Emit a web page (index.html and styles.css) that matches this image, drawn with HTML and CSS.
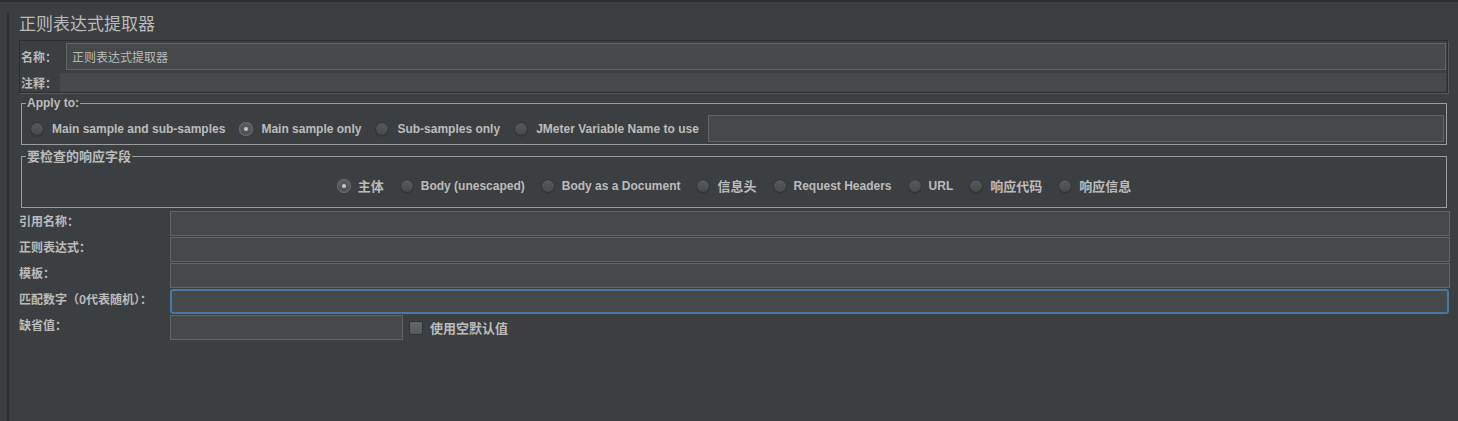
FILE: index.html
```html
<!DOCTYPE html>
<html lang="zh-CN">
<head>
<meta charset="utf-8">
<title>正则表达式提取器</title>
<link rel="stylesheet" href="styles.css">
</head>
<body>
<div class="page">
  <div class="main">
    <h1 class="title">正则表达式提取器</h1>

    <div class="name-panel">
      <div class="name-row">
        <label class="cap cap-name">名称：</label>
        <input class="field field-name" type="text" value="正则表达式提取器" readonly>
      </div>
      <div class="comment-row">
        <label class="cap cap-comment">注释：</label>
        <input class="field field-comment" type="text" value="" readonly>
      </div>
    </div>

    <fieldset class="group group-apply">
      <legend class="legend legend-latin">Apply to:</legend>
      <div class="radio-row row-apply">
        <span class="radio"><i class="dot"></i>Main sample and sub-samples</span>
        <span class="radio"><i class="dot on"></i>Main sample only</span>
        <span class="radio"><i class="dot"></i>Sub-samples only</span>
        <span class="radio radio-last"><i class="dot"></i>JMeter Variable Name to use</span>
        <input class="field field-var" type="text" value="" readonly>
      </div>
    </fieldset>

    <fieldset class="group group-check">
      <legend class="legend legend-cjk">要检查的响应字段</legend>
      <div class="radio-row row-check">
        <span class="radio cjk"><i class="dot on"></i>主体</span>
        <span class="radio"><i class="dot"></i>Body (unescaped)</span>
        <span class="radio"><i class="dot"></i>Body as a Document</span>
        <span class="radio cjk"><i class="dot"></i>信息头</span>
        <span class="radio"><i class="dot"></i>Request Headers</span>
        <span class="radio"><i class="dot"></i>URL</span>
        <span class="radio cjk"><i class="dot"></i>响应代码</span>
        <span class="radio cjk radio-end"><i class="dot"></i>响应信息</span>
      </div>
    </fieldset>

    <div class="form-grid">
      <label class="form-cap">引用名称：</label>
      <input class="field" type="text" value="" readonly>
      <label class="form-cap">正则表达式：</label>
      <input class="field" type="text" value="" readonly>
      <label class="form-cap">模板：</label>
      <input class="field" type="text" value="" readonly>
      <label class="form-cap">匹配数字（0代表随机）：</label>
      <input class="field field-focus" type="text" value="" readonly>
      <label class="form-cap">缺省值：</label>
      <div class="default-row">
        <input class="field field-default" type="text" value="" readonly>
        <span class="check cjk"><i class="box"></i>使用空默认值</span>
      </div>
    </div>
  </div>
</div>
</body>
</html>
```

FILE: styles.css
```css
* {
  box-sizing: border-box;
}

html,
body {
  margin: 0;
  padding: 0;
}

body {
  background: #3c3f41;
  color: #bbbbbb;
  font-family: "Liberation Sans", Arial, "Noto Sans CJK SC", sans-serif;
  font-size: 12px;
  overflow: hidden;
}

.page {
  height: 421px;
  border-top: 2px solid #2b2d2e;
  padding-left: 7px;
}

.main {
  height: 100%;
  border-left: 2px solid #2b2d2e;
  padding: 0 8px 0 10px;
}

.title {
  margin: 11px 0 0 0;
  font-family: "Noto Sans CJK SC", sans-serif;
  font-size: 17px;
  line-height: 20px;
  font-weight: 400;
  color: #bbbbbb;
}

/* name / comment panel */
.name-panel {
  margin: 7px 2px 0 0;
  border: 1px solid #2b2d2e;
  box-shadow: 1px 1px 0 #56595b;
  padding: 1px 1px 0 1px;
}

.name-row,
.comment-row {
  display: flex;
  align-items: center;
}

.name-row {
  margin-top: 1px;
  height: 27px;
}

.comment-row {
  margin-top: 3px;
  height: 19px;
}

.cap {
  font-family: "Noto Sans CJK SC", sans-serif;
  font-weight: 700;
  font-size: 12px;
  line-height: 16px;
}

.cap-name {
  width: 45px;
}

.cap-comment {
  width: 39px;
}

.field {
  display: block;
  appearance: none;
  -webkit-appearance: none;
  margin: 0;
  background: #45494a;
  border: 1px solid #646464;
  border-radius: 0;
  color: #bbbbbb;
  font-family: "Noto Sans CJK SC", sans-serif;
  font-size: 12px;
  padding: 0 5px;
  outline: none;
}

.field-name {
  flex: 1;
  height: 27px;
}

.field-comment {
  flex: 1;
  height: 19px;
  border: none;
}

/* groups */
.group {
  margin: 3px 3px 0 2px;
  padding: 0;
  border: 1px solid #9a9c9e;
  min-width: 0;
}

.legend {
  margin-left: 4px;
  padding: 0 1px;
  color: #bbbbbb;
}

.legend-latin {
  font-family: "Liberation Sans", Arial, sans-serif;
  font-size: 12px;
  line-height: 14px;
  font-weight: 700;
}

.legend-cjk {
  font-family: "Noto Sans CJK SC", sans-serif;
  font-size: 13px;
  line-height: 16px;
  font-weight: 700;
}

.radio-row {
  display: flex;
  align-items: center;
  font-weight: 700;
  font-size: 12px;
}

.row-apply {
  padding: 5px 2px 2px 8px;
}

.row-check {
  justify-content: center;
  height: 43px;
  padding: 12px 0 11px 0;
}

.radio {
  display: inline-flex;
  align-items: center;
  gap: 8px;
  margin-right: 14px;
  white-space: nowrap;
  line-height: 20px;
}

.row-check .radio {
  gap: 7px;
  margin-right: 16px;
}

.row-check .radio-end {
  margin-right: 0;
}

.radio-last {
  margin-right: 9px;
}

.cjk {
  font-family: "Noto Sans CJK SC", sans-serif;
  font-size: 13px;
}

.dot {
  position: relative;
  display: block;
  width: 14px;
  height: 14px;
  border-radius: 50%;
  background: linear-gradient(#555a5c, #464a4c);
  box-shadow: inset 0 0 0 1px #2f3133, 0 1px 0 #35383a;
}

.dot.on {
  background: linear-gradient(#5a5e60, #4a4e50);
  box-shadow: inset 0 0 0 1px #6a6d70, 0 1px 0 #35383a;
}

.dot.on::after {
  content: "";
  position: absolute;
  left: 5px;
  top: 5px;
  width: 4px;
  height: 4px;
  border-radius: 50%;
  background: #c6c6c6;
}

.field-var {
  flex: 1;
  height: 27px;
}

/* lower form */
.form-grid {
  margin-top: 3px;
  display: grid;
  grid-template-columns: 151px 1fr;
  grid-auto-rows: 25px;
  row-gap: 1px;
}

.form-cap {
  font-family: "Noto Sans CJK SC", sans-serif;
  font-weight: 700;
  font-size: 12px;
  line-height: 16px;
  padding-top: 2px;
  white-space: nowrap;
}

.form-grid .field {
  height: 25px;
}

.form-grid .field-focus {
  border: 2px solid #4a78a6;
  border-radius: 3px;
  margin-right: 1px;
}

.default-row {
  display: flex;
  align-items: center;
}

.form-grid .field-default {
  width: 233px;
}

.check {
  display: inline-flex;
  align-items: center;
  gap: 7px;
  margin-left: 6px;
  font-weight: 700;
  line-height: 16px;
}

.box {
  display: block;
  width: 14px;
  height: 14px;
  border-radius: 2px;
  background: linear-gradient(#64686a, #55595b);
  box-shadow: inset 0 0 0 1px #2f3133;
}
```
